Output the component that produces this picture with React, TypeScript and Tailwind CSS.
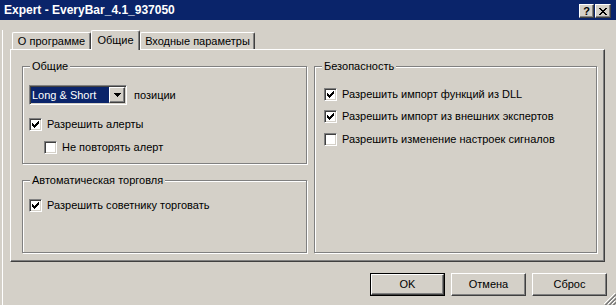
import React from 'react';

const raised =
  'border border-t-white border-l-white border-r-[#404040] border-b-[#404040] shadow-[inset_-1px_-1px_0_#808080]';
const sunken =
  'border border-t-[#808080] border-l-[#808080] border-r-white border-b-white shadow-[inset_1px_1px_0_#404040,inset_-1px_-1px_0_#d4d0c8]';

// classic 7x7 pixel tick
const Tick: React.FC = () => {
  const cols = [2, 3, 4, 3, 2, 1, 0];
  const d = cols.map((y, x) => `M${x + 1} ${y + 1}h1v3h-1z`).join('');
  return (
    <svg width="9" height="9" viewBox="0 0 9 9" shapeRendering="crispEdges">
      <path d={d} fill="#000" />
    </svg>
  );
};

interface CheckProps {
  label: string;
  checked?: boolean;
  className?: string;
}

const Check: React.FC<CheckProps> = ({ label, checked, className = '' }) => (
  <div className={`flex items-center h-[13px] gap-[5px] ${className}`}>
    <div className={`w-[13px] h-[13px] bg-white flex items-center justify-center ${sunken}`}>
      {checked && <Tick />}
    </div>
    <span className="leading-[13px] whitespace-nowrap">{label}</span>
  </div>
);

interface GroupProps {
  title: string;
  className?: string;
  children?: React.ReactNode;
}

const Group: React.FC<GroupProps> = ({ title, className = '', children }) => (
  <div className={`relative border border-[#808080] shadow-[inset_1px_1px_0_#fff,1px_1px_0_#fff] ${className}`}>
    <span className="absolute -top-[7px] left-[7px] bg-[#d4d0c8] px-[2px] leading-[13px] whitespace-nowrap">
      {title}
    </span>
    {children}
  </div>
);

const Button: React.FC<{ label: string; isDefault?: boolean }> = ({ label, isDefault }) =>
  isDefault ? (
    <div className="w-[75px] h-[23px] border border-black flex">
      <div className={`flex-1 flex items-center justify-center ${raised}`}>{label}</div>
    </div>
  ) : (
    <div className={`w-[75px] h-[23px] flex items-center justify-center ${raised}`}>{label}</div>
  );

export default function App() {
  return (
    <div className="relative w-[616px] h-[305px] overflow-hidden bg-[#d4d0c8] text-[11px] text-black font-['Liberation_Sans',Arial,sans-serif]">
      {/* title bar */}
      <div className="h-[20px] bg-[#0a246a] flex items-start">
        <span className="pl-[4px] leading-[20px] text-[12px] font-bold text-white whitespace-nowrap">
          Expert - EveryBar_4.1_937050
        </span>
        <div className="ml-auto mt-[4px] mr-[5px] flex gap-[1px]">
          <div className={`w-[15px] h-[14px] bg-[#d4d0c8] flex items-center justify-center font-bold leading-none ${raised}`}>
            ?
          </div>
          <div className={`w-[16px] h-[14px] bg-[#d4d0c8] flex items-center justify-center ${raised}`}>
            <svg width="8" height="7" viewBox="0 0 8 7" shapeRendering="crispEdges">
              <path
                d="M0 0h2v1h-2zM6 0h2v1h-2zM1 1h2v1h-2zM5 1h2v1h-2zM2 2h4v1h-4zM3 3h2v1h-2zM2 4h4v1h-4zM1 5h2v1h-2zM5 5h2v1h-2zM0 6h2v1h-2zM6 6h2v1h-2z"
                fill="#000"
              />
            </svg>
          </div>
        </div>
      </div>

      {/* body */}
      <div className="ml-[2px] h-[285px] border-l border-white">
        {/* tabs */}
        <div className="relative z-10 ml-[9px] mt-[10px] h-[20px] flex items-end">
          <div className="w-[79px] h-[17px] mb-[1px] pt-[1px] rounded-tl-[2px] rounded-tr-[2px] border-l border-t border-r border-l-white border-t-white border-r-[#404040] shadow-[inset_-1px_0_0_#808080] flex items-center justify-center whitespace-nowrap">
            О программе
          </div>
          <div className="w-[49px] h-[20px] bg-[#d4d0c8] rounded-tl-[2px] rounded-tr-[2px] border-l border-t border-r border-l-white border-t-white border-r-[#404040] shadow-[inset_-1px_0_0_#808080] flex items-center justify-center whitespace-nowrap">
            Общие
          </div>
          <div className="w-[115px] h-[17px] mb-[1px] pt-[1px] rounded-tl-[2px] rounded-tr-[2px] border-l border-t border-r border-l-white border-t-white border-r-[#404040] shadow-[inset_-1px_0_0_#808080] flex items-center justify-center whitespace-nowrap">
            Входные параметры
          </div>
        </div>

        {/* tab page */}
        <div className={`-mt-[1px] ml-[7px] w-[595px] h-[213px] pt-[16px] pl-[11px] flex gap-[7px] ${raised}`}>
          <div className="w-[285px] flex flex-col gap-[16px]">
            <Group title="Общие" className="h-[98px] pl-[6px] pt-[18px]">
              <div className="flex items-center h-[20px]">
                <div className={`w-[98px] h-[20px] bg-white p-[1px] flex ${sunken}`}>
                  <div className="w-[78px] bg-[#0a246a] text-white pl-[1px] flex items-center whitespace-nowrap leading-none">
                    Long &amp; Short
                  </div>
                  <div className={`w-[16px] bg-[#d4d0c8] flex items-center justify-center ${raised}`}>
                    <svg width="7" height="4" viewBox="0 0 7 4" shapeRendering="crispEdges">
                      <path d="M0 0h7v1h-7zM1 1h5v1h-5zM2 2h3v1h-3zM3 3h1v1h-1z" fill="#000" />
                    </svg>
                  </div>
                </div>
                <span className="ml-[7px]">позиции</span>
              </div>
              <Check label="Разрешить алерты" checked className="mt-[13px]" />
              <Check label="Не повторять алерт" className="mt-[10px] ml-[15px]" />
            </Group>
            <Group title="Автоматическая торговля" className="h-[73px] pl-[6px] pt-[18px]">
              <Check label="Разрешить советнику торговать" checked />
            </Group>
          </div>
          <Group title="Безопасность" className="w-[283px] h-[187px] pl-[9px] pt-[21px]">
            <Check label="Разрешить импорт функций из DLL" checked />
            <Check label="Разрешить импорт из внешних экспертов" checked className="mt-[9px]" />
            <Check label="Разрешить изменение настроек сигналов" className="mt-[10px]" />
          </Group>
        </div>

        {/* buttons */}
        <div className="mt-[11px] pr-[9px] flex justify-end gap-[6px]">
          <Button label="OK" isDefault />
          <Button label="Отмена" />
          <Button label="Сброс" />
        </div>
      </div>

      {/* size grip */}
      <svg className="absolute right-0 bottom-0" width="12" height="12" viewBox="0 0 12 12" shapeRendering="crispEdges">
        <path d="M11 0L0 11M11 4L4 11M11 8L8 11" stroke="#fff" strokeWidth="1" />
        <path d="M12 1L1 12M12 2L2 12M12 5L5 12M12 6L6 12M12 9L9 12M12 10L10 12" stroke="#808080" strokeWidth="1" />
      </svg>
    </div>
  );
}
